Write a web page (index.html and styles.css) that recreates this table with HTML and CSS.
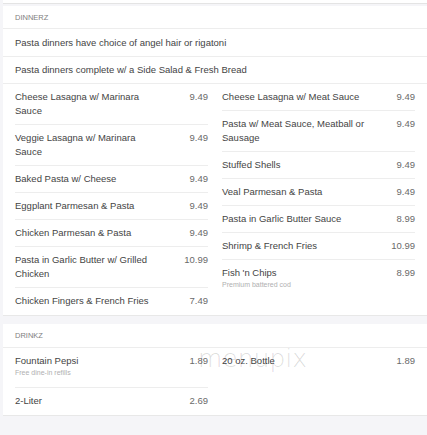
FILE: index.html
```html
<!DOCTYPE html>
<html lang="en">

<head>
    <meta charset="UTF-8">
    <meta name="viewport" content="width=device-width, initial-scale=1.0">
    <title>Menu</title>
    <link rel="stylesheet" href="styles.css">
</head>

<body>
    <div class="prev-card"></div>

    <!-- Dinners -->
    <section class="menu-card">
        <div class="menu-title">Dinnerz</div>
        <div class="menu-note">Pasta dinners have choice of angel hair or rigatoni</div>
        <div class="menu-note">Pasta dinners complete w/ a Side Salad &amp; Fresh Bread</div>
        <div class="menu-columns">
            <div class="menu-col">
                <div class="item">
                    <div class="item-name">Cheese Lasagna w/ Marinara Sauce</div>
                    <div class="item-price">9.49</div>
                </div>
                <div class="item">
                    <div class="item-name">Veggie Lasagna w/ Marinara Sauce</div>
                    <div class="item-price">9.49</div>
                </div>
                <div class="item">
                    <div class="item-name">Baked Pasta w/ Cheese</div>
                    <div class="item-price">9.49</div>
                </div>
                <div class="item">
                    <div class="item-name">Eggplant Parmesan &amp; Pasta</div>
                    <div class="item-price">9.49</div>
                </div>
                <div class="item">
                    <div class="item-name">Chicken Parmesan &amp; Pasta</div>
                    <div class="item-price">9.49</div>
                </div>
                <div class="item">
                    <div class="item-name">Pasta in Garlic Butter w/ Grilled Chicken</div>
                    <div class="item-price">10.99</div>
                </div>
                <div class="item">
                    <div class="item-name">Chicken Fingers &amp; French Fries</div>
                    <div class="item-price">7.49</div>
                </div>
            </div>
            <div class="menu-col">
                <div class="item">
                    <div class="item-name">Cheese Lasagna w/ Meat Sauce</div>
                    <div class="item-price">9.49</div>
                </div>
                <div class="item">
                    <div class="item-name">Pasta w/ Meat Sauce, Meatball or Sausage</div>
                    <div class="item-price">9.49</div>
                </div>
                <div class="item">
                    <div class="item-name">Stuffed Shells</div>
                    <div class="item-price">9.49</div>
                </div>
                <div class="item">
                    <div class="item-name">Veal Parmesan &amp; Pasta</div>
                    <div class="item-price">9.49</div>
                </div>
                <div class="item">
                    <div class="item-name">Pasta in Garlic Butter Sauce</div>
                    <div class="item-price">8.99</div>
                </div>
                <div class="item">
                    <div class="item-name">Shrimp &amp; French Fries</div>
                    <div class="item-price">10.99</div>
                </div>
                <div class="item">
                    <div class="item-name">Fish 'n Chips
                        <div class="item-desc">Premium battered cod</div>
                    </div>
                    <div class="item-price">8.99</div>
                </div>
            </div>
        </div>
    </section>

    <!-- Drinks -->
    <section class="menu-card">
        <div class="menu-title drinks">Drinkz</div>
        <div class="menu-columns">
            <div class="menu-col">
                <div class="item">
                    <div class="item-name">Fountain Pepsi
                        <div class="item-desc">Free dine-in refills</div>
                    </div>
                    <div class="item-price">1.89</div>
                </div>
                <div class="item">
                    <div class="item-name">2-Liter</div>
                    <div class="item-price">2.69</div>
                </div>
            </div>
            <div class="menu-col">
                <div class="item">
                    <div class="item-name">20 oz. Bottle</div>
                    <div class="item-price">1.89</div>
                </div>
            </div>
        </div>
        <div class="watermark">menupix</div>
    </section>
</body>

</html>
```

FILE: styles.css
```css
body {
    font-family: "Liberation Sans", Arial, sans-serif;
    margin: 0;
    padding: 0 0 0 3px;
    background-color: #f5f5f8;
    color: #444;
    font-size: 9.5px;
}

.prev-card {
    height: 3px;
    background-color: #fff;
    border-bottom: 1px solid #e4e4e4;
    margin-bottom: 2px;
}

.menu-card {
    background-color: white;
    border-bottom: 1px solid #e8e8e8;
    margin-bottom: 8px;
    position: relative;
}

.menu-title {
    text-transform: uppercase;
    font-size: 7.5px;
    color: #808080;
    padding: 0 12px;
    height: 22px;
    line-height: 23px;
    border-bottom: 1px solid #ededed;
}

.menu-title.drinks {
    height: 23px;
    line-height: 24px;
}

.menu-note {
    padding: 6.5px 12px 6px;
    line-height: 14px;
    border-bottom: 1px solid #ededed;
}

.menu-columns {
    display: grid;
    grid-template-columns: 193px 193px;
    gap: 14px;
    padding: 0 12px 1px;
    align-items: start;
}

.item {
    display: flex;
    justify-content: space-between;
    padding: 6px 0;
    line-height: 14px;
    border-bottom: 1px solid #ededed;
}

.item:last-child {
    border-bottom: none;
}

.item-name {
    color: #444;
    max-width: 146px;
}

.item-price {
    color: #6a6a6a;
    white-space: nowrap;
}

.item-desc {
    font-size: 7px;
    color: #b0b0b0;
    line-height: 10px;
    margin-bottom: 3px;
}

.watermark {
    position: absolute;
    left: 195px;
    top: 20px;
    font-family: "DejaVu Sans", sans-serif;
    font-weight: 200;
    font-size: 25px;
    color: rgba(0, 0, 0, 0.14);
}
```
